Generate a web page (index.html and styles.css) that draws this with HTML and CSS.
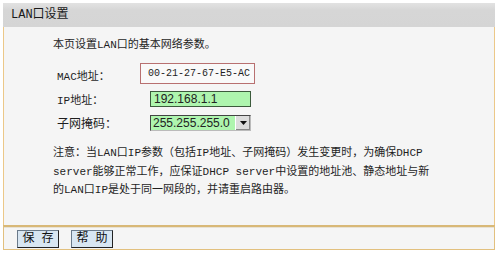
FILE: index.html
```html
<!DOCTYPE html>
<html lang="zh-CN">
<head>
<meta charset="utf-8">
<title>LAN口设置</title>
<link rel="stylesheet" href="styles.css">
</head>
<body>
<div class="panel">
  <div class="head">LAN口设置</div>
  <div class="content">
    <p class="intro">本页设置LAN口的基本网络参数。</p>
    <div class="form">
      <div class="row">
        <span class="label">MAC地址：</span>
        <span class="mac">00-21-27-67-E5-AC</span>
      </div>
      <div class="row">
        <span class="label">IP地址：</span>
        <span class="input">192.168.1.1</span>
      </div>
      <div class="row">
        <span class="label big">子网掩码：</span>
        <span class="select"><span class="sel-val">255.255.255.0</span><span class="arrow"><svg width="7" height="4" viewBox="0 0 7 4"><path d="M0 0H7L3.5 4Z" fill="#111"/></svg></span></span>
      </div>
    </div>
    <div class="note">
      <div class="line">注意：当LAN口IP参数（包括IP地址、子网掩码）发生变更时，为确保DHCP</div>
      <div class="line">server能够正常工作，应保证DHCP server中设置的地址池、静态地址与新</div>
      <div class="line">的LAN口IP是处于同一网段的，并请重启路由器。</div>
    </div>
  </div>
  <div class="foot">
    <span class="btn">保 存</span>
    <span class="btn">帮 助</span>
  </div>
</div>
</body>
</html>
```

FILE: styles.css
```css
html, body {
  margin: 0;
  padding: 0;
  background: #ffffff;
}
body {
  font-family: "Liberation Mono", "Noto Sans CJK SC", monospace;
  font-size: 11px;
  color: #1e1e1e;
}
.panel {
  width: 492px;
  margin: 3px 0 0 3px;
}
.head {
  height: 24px;
  line-height: 24px;
  padding-left: 8px;
  background: linear-gradient(#e2e2e2, #d6d6d6 30%, #d5d5d5);
  color: #1a1a1a;
  font-size: 12px;
}
.content {
  height: 198px;
  box-sizing: border-box;
  background: #f5f5f5;
  border-left: 1px solid #ecc888;
  border-right: 1px solid #ecc888;
  padding: 10px 0 0 49px;
}
.intro {
  margin: 0;
  line-height: 16px;
}
.form {
  margin-top: 13px;
  padding-left: 4px;
  display: flex;
  flex-direction: column;
  gap: 6px;
}
.row {
  display: flex;
  align-items: center;
  height: 18px;
}
.label {
  width: 83px;
}
.label.big {
  font-size: 12px;
  width: 93px;
}
.mac {
  box-sizing: border-box;
  width: 115px;
  height: 21px;
  margin-top: -3px;
  border: 1px solid #b87070;
  background: #f9f9f9;
  padding-left: 7px;
  line-height: 19px;
  font-size: 10px;
}
.row .input {
  box-sizing: border-box;
  width: 101px;
  height: 16px;
  margin-left: 10px;
  border: 1px solid #3c5a3c;
  background: #aef5ae;
  padding-left: 3px;
  line-height: 14px;
  font-family: "Liberation Sans", Arial, sans-serif;
  font-size: 12px;
  color: #222;
}
.select {
  box-sizing: border-box;
  width: 101px;
  height: 16px;
  border: 1px solid #444;
  border-right-color: #bbb;
  border-bottom-color: #bbb;
  background: #aef5ae;
  display: flex;
  align-items: stretch;
}
.sel-val {
  flex: 1;
  padding-left: 2px;
  line-height: 14px;
  font-family: "Liberation Sans", Arial, sans-serif;
  font-size: 12px;
  color: #222;
}
.arrow {
  width: 14px;
  background: #dcdcdc;
  border-left: 1px solid #fff;
  box-shadow: inset -1px -1px 0 #888;
  display: flex;
  align-items: center;
  justify-content: center;
}
.note {
  margin-top: 12px;
  display: flex;
  flex-direction: column;
}
.line {
  height: 18.5px;
  line-height: 18.5px;
  white-space: nowrap;
}
.foot {
  height: 25px;
  box-sizing: border-box;
  background: #f5f5f5;
  border: 1px solid #e2c07e;
  border-top: 2px solid #d8b877;
  box-shadow: inset 0 1px 0 #e8e2d4;
  padding: 3px 0 0 13px;
  display: flex;
  gap: 12px;
  align-items: flex-start;
}
.btn {
  box-sizing: border-box;
  width: 42px;
  height: 18px;
  border: 1px solid #6a7a8a;
  border-right-color: #222;
  border-bottom-color: #222;
  background: #d8e6f2;
  text-align: center;
  line-height: 16px;
  font-size: 12px;
  color: #111;
}
```
